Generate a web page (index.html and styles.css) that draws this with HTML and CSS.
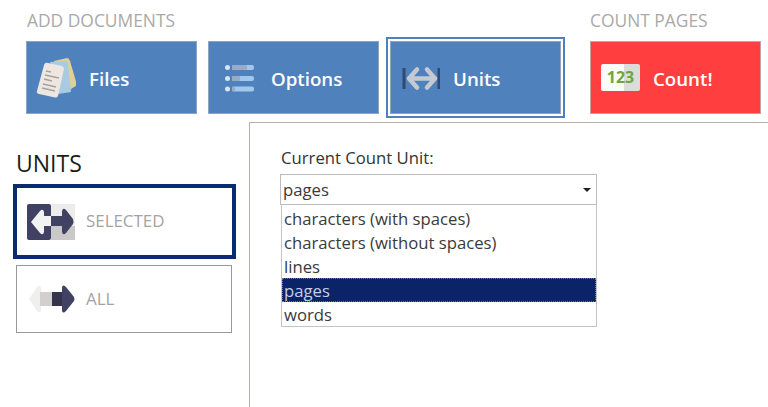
FILE: index.html
```html
<!DOCTYPE html>
<html lang="en">
<head>
    <meta charset="UTF-8">
    <title>Count Units</title>
    <link rel="stylesheet" href="styles.css">
</head>
<body>
    <div class="toolbar">
        <div class="group group-add">
            <div class="group-title">ADD DOCUMENTS</div>
            <div class="group-buttons">
                <div class="tool-btn">
                    <svg width="46" height="46" viewBox="-3 3 46 46">
                        <path d="M21 9 L34 6 Q36 6 37 9 L44 33 L35 39 Z" fill="#e3cf96"/>
                        <path d="M17 10 L33 9 Q35 9 35 11 L38 40 L25 42 Z" fill="#a9cbe0"/>
                        <path d="M15 11 L29 14 Q31 15 31 17 L25 44 Q24 46 22 45.500 L6 42 Q3 41 4 39 L11 13 Q12 10 15 11 Z" fill="#eee6e1"/>
                        <path d="M13 19 L18 20 M12 23 L26 26 M11 27 L19 29 M10 32 L23 35 M9 36 L22 39" stroke="#a8a29e" stroke-width="1.500"/>
                    </svg>
                    <span>Files</span>
                </div>
                <div class="tool-btn">
                    <svg width="46" height="46" viewBox="0 0 46 46">
                        <circle cx="15.500" cy="12.500" r="2.500" fill="#d5e6f7"/>
                        <circle cx="15.500" cy="23.500" r="2.500" fill="#d5e6f7"/>
                        <circle cx="15.500" cy="34" r="2.500" fill="#d5e6f7"/>
                        <rect x="20" y="10" width="22" height="5" rx="2" fill="#a3c8ee"/>
                        <rect x="20" y="21" width="22" height="5" rx="2" fill="#a3c8ee"/>
                        <rect x="20" y="31.500" width="22" height="5" rx="2" fill="#a3c8ee"/>
                        <rect x="20" y="10" width="15" height="5" rx="1" fill="#9aabc6"/>
                        <rect x="20" y="21" width="8" height="5" rx="1" fill="#9aabc6"/>
                        <rect x="20" y="31.500" width="3" height="5" rx="1" fill="#9aabc6"/>
                    </svg>
                    <span>Options</span>
                </div>
                <div class="tool-frame">
                    <div class="tool-btn">
                        <svg width="46" height="46" viewBox="0 0 46 46">
                            <path d="M10 13 V34 M45 13 V34" stroke="#34496f" stroke-width="3"/>
                            <path d="M15 23.500 H41 M15 23.500 L23 14.500 M15 23.500 L23 32.500 M41 23.500 L33 14.500 M41 23.500 L33 32.500" stroke="#c5cad2" stroke-width="4.500" fill="none" stroke-linecap="round"/>
                        </svg>
                        <span>Units</span>
                    </div>
                </div>
            </div>
        </div>
        <div class="group group-count">
            <div class="group-title">COUNT PAGES</div>
            <div class="group-buttons">
                <div class="tool-btn tool-btn-red">
                    <div class="count-badge">123</div>
                    <span>Count!</span>
                </div>
            </div>
        </div>
    </div>

    <div class="content">
        <div class="sidebar">
            <h3>UNITS</h3>
            <div class="side-btn side-btn-active">
                <svg width="48" height="36" viewBox="0 0 48 36">
                    <rect x="0" y="0" width="24" height="36" rx="2" fill="#414263"/>
                    <rect x="24" y="0" width="24" height="22" fill="#ececec"/>
                    <rect x="24" y="22" width="24" height="14" fill="#cbc8ca"/>
                    <path d="M4 18 L13 7 Q16 4 17 8 V12 H24 V22 H17 V28 Q16 32 13 29 Z" fill="#f2f2f2"/>
                    <path d="M24 12 H35 V7 Q36 3 39 6 L46 15 Q47 18 46 20 L39 29 Q36 32 35 28 V22 H24 Z" fill="#414263"/>
                </svg>
                <span>SELECTED</span>
            </div>
            <div class="side-btn">
                <svg width="47" height="30" viewBox="0 0 47 30">
                    <path d="M0 15 L8 3 Q11 0 12 4 V8 H23 V22 H12 V26 Q11 30 8 27 Z" fill="#f0efef"/>
                    <rect x="11" y="8" width="12" height="14" fill="#d3cfcf"/>
                    <path d="M23 8 H33 V3 Q34 0 37 3 L45 13 Q46 15 45 17 L37 27 Q34 30 33 27 V22 H23 Z" fill="#414263"/>
                    <rect x="23" y="8" width="10" height="14" fill="#34344f"/>
                </svg>
                <span>ALL</span>
            </div>
        </div>

        <div class="panel">
            <div class="field-label">Current Count Unit:</div>
            <div class="combo">
                <div class="combo-value">
                    <span>pages</span>
                    <span class="combo-arrow"></span>
                </div>
                <ul class="combo-list">
                    <li>characters (with spaces)</li>
                    <li>characters (without spaces)</li>
                    <li>lines</li>
                    <li class="selected">pages</li>
                    <li>words</li>
                </ul>
            </div>
        </div>
    </div>
</body>
</html>
```

FILE: styles.css
```css
html, body {
    margin: 0;
    padding: 0;
    height: 100%;
    overflow: hidden;
}
body {
    font-family: "Open Sans", Arial, sans-serif;
    background-color: white;
    display: flex;
    flex-direction: column;
}
.toolbar {
    display: flex;
    padding: 8px 0 0 26px;
    height: 122px;
    box-sizing: border-box;
}
.group-add {
    width: 564px;
    flex-shrink: 0;
}
.group-title {
    font-size: 17.4px;
    line-height: 24px;
    color: #a9a9a9;
    height: 29px;
    padding-left: 1px;
}
.group-count .group-title {
    padding-left: 0;
}
.group-buttons {
    display: flex;
    align-items: center;
    height: 73px;
    margin-top: 4px;
}
.tool-btn {
    display: flex;
    align-items: center;
    gap: 13px;
    width: 171px;
    height: 73px;
    box-sizing: border-box;
    padding-left: 3px;
    background-color: #4f81bd;
    color: white;
    font-size: 18.7px;
    font-weight: 600;
    border: 1px solid #8fa5bf;
    margin-right: 11px;
    flex-shrink: 0;
}
.tool-btn span {
    margin-top: 2px;
}
.tool-frame {
    border: 2px solid #4f81bd;
    padding: 2px;
    margin-left: -4px;
    display: flex;
}
.tool-frame .tool-btn {
    margin-right: 0;
}
.tool-btn-red {
    background-color: #ff3f3f;
    border-color: #c9a0a0;
    padding-left: 10px;
    gap: 13px;
    margin-right: 0;
}
.count-badge {
    background: linear-gradient(90deg, #fbfbf8 58%, #dcdcd8 58%);
    color: #6aa83f;
    font-size: 16px;
    font-weight: 700;
    line-height: 27px;
    width: 39px;
    text-align: center;
    border-radius: 2px;
}
.content {
    display: flex;
    flex: 1;
}
.sidebar {
    width: 249px;
    box-sizing: border-box;
    padding: 27px 0 0 13px;
}
.sidebar h3 {
    margin: 0 0 6px 3px;
    font-size: 23px;
    line-height: 29px;
    font-weight: 400;
    color: #1c1c1c;
}
.side-btn {
    display: flex;
    align-items: center;
    gap: 10px;
    width: 216px;
    height: 68px;
    box-sizing: border-box;
    margin: 6px 0 0 3px;
    padding-left: 12px;
    border: 1px solid #999;
    color: #a3a3a3;
    font-size: 16.9px;
}
.side-btn span {
    margin-top: -2px;
}
.side-btn-active {
    width: 223px;
    height: 75px;
    margin: 0;
    border: 4px solid #0b2a72;
    padding-left: 10px;
    gap: 11px;
}
.panel {
    flex: 1;
    border-top: 1px solid #b7b2ae;
    border-left: 1px solid #b7b2ae;
    padding: 23px 0 0 30px;
}
.field-label {
    font-size: 16.7px;
    line-height: 23px;
    color: #333;
    margin-bottom: 5px;
    padding-left: 1px;
}
.combo {
    width: 317px;
    font-size: 16.7px;
    color: #3a3a3a;
}
.combo-value {
    display: flex;
    justify-content: space-between;
    align-items: center;
    height: 31px;
    box-sizing: border-box;
    border: 1px solid #bcbcbc;
    padding: 0 5px 0 2px;
}
.combo-arrow {
    border-left: 4px solid transparent;
    border-right: 4px solid transparent;
    border-top: 4px solid #222;
}
.combo-list {
    list-style: none;
    margin: 0 0 0 1px;
    padding: 1px 0 0 0;
    border: 1px solid #c4c4c4;
    border-top: none;
}
.combo-list li {
    height: 24px;
    line-height: 26px;
    padding-left: 2px;
}
.combo-list li.selected {
    background-color: #0b2468;
    color: #c6cde6;
    outline: 1px dotted #777;
    outline-offset: -1px;
}
```
